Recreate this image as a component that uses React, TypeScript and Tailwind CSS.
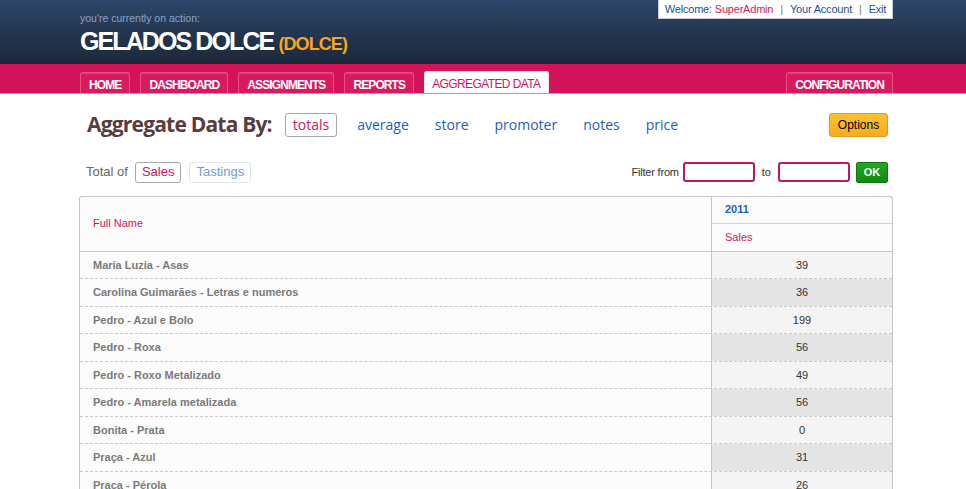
import React from 'react';

const tabs = ['HOME', 'DASHBOARD', 'ASSIGNMENTS', 'REPORTS'];
const groupings = ['average', 'store', 'promoter', 'notes', 'price'];

const rows: { name: string; sales: number }[] = [
    { name: 'Maria Luzia - Asas', sales: 39 },
    { name: 'Carolina Guimarães - Letras e numeros', sales: 36 },
    { name: 'Pedro - Azul e Bolo', sales: 199 },
    { name: 'Pedro - Roxa', sales: 56 },
    { name: 'Pedro - Roxo Metalizado', sales: 49 },
    { name: 'Pedro - Amarela metalizada', sales: 56 },
    { name: 'Bonita - Prata', sales: 0 },
    { name: 'Praça - Azul', sales: 31 },
    { name: 'Praça - Pérola', sales: 26 },
];

const Tab = ({ label, active }: { label: string; active?: boolean }) => (
    <div
        className={
            active
                ? 'h-[22px] pt-[2px] px-[7px] flex items-center rounded-t-[3px] bg-white text-[#d4145a] border border-b-0 border-[#e8e8e8] text-[12px] tracking-[-0.6px]'
                : 'h-[21px] pt-[3px] px-[8px] flex items-center rounded-t-[3px] bg-[#d81a5e] text-white font-bold border border-b-0 border-[#e4527f] text-[12px] tracking-[-0.9px] shadow-[inset_0_1px_0_rgba(255,255,255,0.15)]'
        }
    >
        {label}
    </div>
);

export default function App() {
    return (
        <div className="min-h-[489px] bg-white font-['Liberation_Sans',Arial,sans-serif]">
            {/* Dark header */}
            <div className="h-[64px] bg-gradient-to-b from-[#2d4669] to-[#1b283a]">
                <div className="ml-[80px] w-[813px] flex justify-between">
                    <div className="pt-[11px]">
                        <div className="text-[10.5px] text-[#8ea4c3] leading-[14px]">you're currently on action:</div>
                        <div className="mt-[1px] flex items-baseline gap-[5px]">
                            <span className="text-[25px] font-bold text-white tracking-[-1.9px] leading-[30px]">GELADOS DOLCE</span>
                            <span className="text-[18px] font-bold text-[#f6a623] tracking-[-0.9px]">(DOLCE)</span>
                        </div>
                    </div>
                    <div className="h-[19px] w-[235px] bg-white border-x border-b border-[#c9ced6] flex items-center justify-center gap-[7px] text-[11px] text-[#1d4f91] tracking-[-0.2px]">
                        <span>
                            Welcome: <span className="text-[#d4145a]">SuperAdmin</span>
                        </span>
                        <span className="text-[#777]">|</span>
                        <span>Your Account</span>
                        <span className="text-[#777]">|</span>
                        <span>Exit</span>
                    </div>
                </div>
            </div>

            {/* Pink nav band */}
            <div className="h-[30px] bg-[#d4145a] border-b border-[#a9a9a9] flex items-end">
                <div className="ml-[80px] w-[813px] flex items-end justify-between">
                    <div className="flex items-end gap-[10px]">
                        {tabs.map((t) => (
                            <Tab key={t} label={t} />
                        ))}
                        <Tab label="AGGREGATED DATA" active />
                    </div>
                    <Tab label="CONFIGURATION" />
                </div>
            </div>

            <div className="ml-[79px] w-[814px]">
                {/* Aggregate Data By */}
                <div className="mt-[15px] flex items-center justify-between pl-[8px] pr-[5px]">
                    <div className="flex items-center font-['Open_Sans',sans-serif]">
                        <span className="text-[21px] font-bold text-[#5b3c3c] tracking-[-0.8px] mr-[13px]">Aggregate Data By:</span>
                        <span className="h-[24px] px-[7px] flex items-center rounded-[3px] border border-[#a8a8a8] text-[14px] text-[#d4145a]">totals</span>
                        {groupings.map((g, i) => (
                            <span key={g} className={`${i === 0 ? 'ml-[20px]' : 'ml-[26px]'} text-[14px] text-[#1860c8]`}>
                                {g}
                            </span>
                        ))}
                    </div>
                    <button className="h-[24px] w-[59px] rounded-[3px] border border-[#e29b14] bg-gradient-to-b from-[#fdc02f] to-[#f8ac1c] text-[12px] text-black">
                        Options
                    </button>
                </div>

                {/* Total of / filter */}
                <div className="mt-[21px] flex items-center justify-between pl-[7px] pr-[5px]">
                    <div className="flex items-center text-[13px]">
                        <span className="text-[#666] mr-[7px]">Total of</span>
                        <span className="h-[21px] px-[6px] flex items-center rounded-[3px] border border-[#a8a8a8] text-[#d4145a]">Sales</span>
                        <span className="ml-[8px] h-[21px] px-[6px] flex items-center rounded-[3px] border border-[#e2e6ec] text-[#6b9de0]">Tastings</span>
                    </div>
                    <div className="flex items-center text-[11px] text-[#333]">
                        <span className="mr-[4px] tracking-[-0.2px]">Filter from</span>
                        <div className="h-[20px] w-[72px] rounded-[3px] border-2 border-[#c2185b] bg-white" />
                        <span className="mx-[7px]">to</span>
                        <div className="h-[20px] w-[72px] rounded-[3px] border-2 border-[#c2185b] bg-white" />
                        <button className="ml-[6px] h-[21px] w-[32px] rounded-[2px] border border-[#0d7a0d] bg-gradient-to-b from-[#22a822] to-[#118a11] text-[11px] font-bold text-white">
                            OK
                        </button>
                    </div>
                </div>

                {/* Table */}
                <div className="mt-[13px] border border-b-0 border-[#c6c6c6] rounded-t-[3px] overflow-hidden bg-[#fcfcfc]">
                    <div className="flex border-b border-[#c6c6c6]">
                        <div className="w-[631px] h-[54px] flex items-center pl-[13px] text-[11px] text-[#d4145a]">Full Name</div>
                        <div className="flex-1 border-l border-[#c6c6c6]">
                            <div className="h-[27px] flex items-center pl-[13px] text-[11px] font-bold text-[#1f5fbf] border-b border-[#d4d4d4]">2011</div>
                            <div className="h-[27px] flex items-center pl-[13px] text-[11px] text-[#d4145a]">Sales</div>
                        </div>
                    </div>
                    {rows.map((r, i) => (
                        <div key={i} className="flex h-[27.5px] border-b border-dashed border-[#c8c8c8]">
                            <div className="w-[631px] flex items-center pl-[13px] text-[11px] font-bold text-[#7a7a7a] bg-[#fcfcfc]">{r.name}</div>
                            <div
                                className={`flex-1 border-l border-[#c6c6c6] flex items-center justify-center text-[11px] text-[#333] ${
                                    i % 2 === 0 ? 'bg-[#f4f4f4]' : 'bg-[#e4e4e4]'
                                }`}
                            >
                                {r.sales}
                            </div>
                        </div>
                    ))}
                </div>
            </div>
        </div>
    );
}
